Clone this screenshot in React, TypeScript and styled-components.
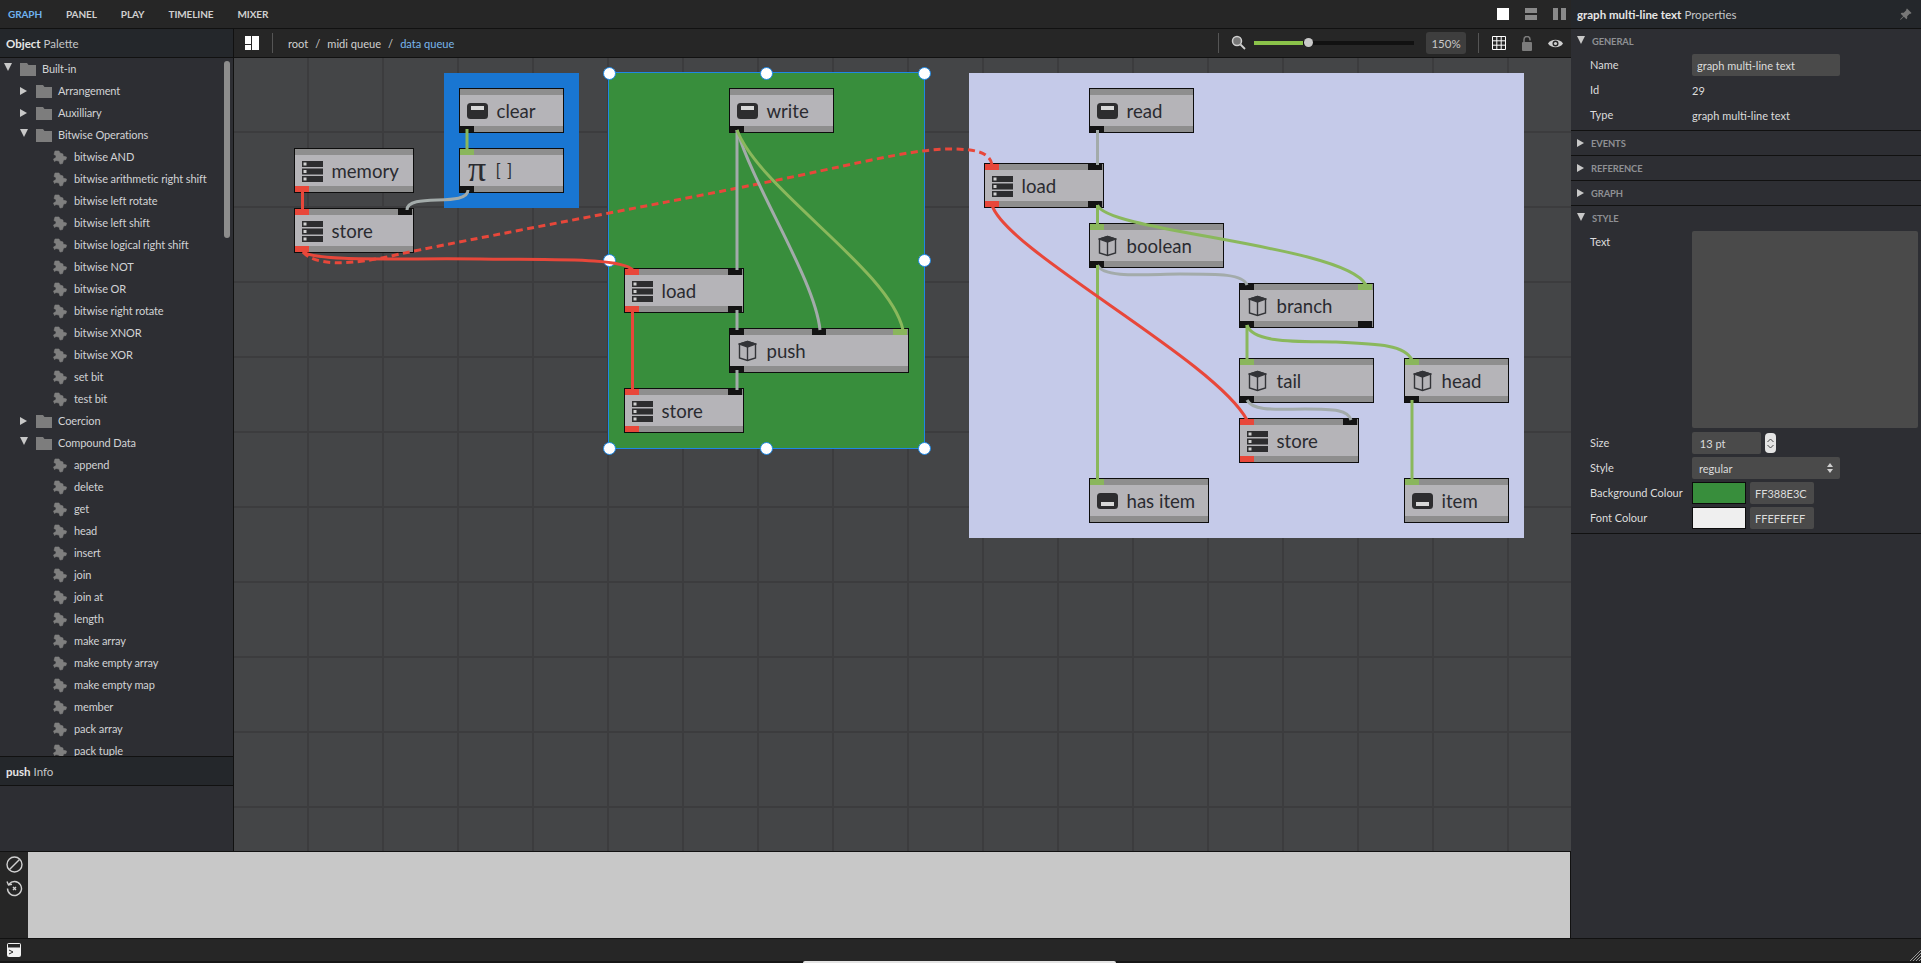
import React from "react";
import styled, { createGlobalStyle } from "styled-components";
import { BsPinAngleFill } from "react-icons/bs";

const Global = createGlobalStyle`
  html, body { margin: 0; padding: 0; background: #111; overflow: hidden; }
  body { font-family: Lato, "Open Sans", sans-serif; }
  * { box-sizing: border-box; }
`;

const ORIGIN_X = 234;
const ORIGIN_Y = 58;

const Root = styled.div`
  width: 1921px; height: 963px; display: flex; flex-direction: column; overflow: hidden; position: relative;
  background: #161616; font-family: Lato, sans-serif;
`;
const Main = styled.div`display: flex; height: 938px; flex: none;`;
const Work = styled.div`width: 1571px; display: flex; flex-direction: column; flex: none;`;
const TopBar = styled.div`
  height: 29px; background: #262626; border-bottom: 1px solid #111; display: flex; align-items: center;
  padding: 0 8px; flex: none;
`;
const Tab = styled.span<{ $active?: boolean }>`
  font-size: 10px; font-weight: 700; margin-right: 24px; letter-spacing: -0.1px;
  color: ${p => (p.$active ? "#6fb3f0" : "#d0d0d0")};
`;
const Spacer = styled.div`flex: 1;`;
const WinButtons = styled.div`display: flex; gap: 16px; margin-right: -3px; align-items: center;`;
const WinIcon = styled.svg`display: block;`;

const Columns = styled.div`flex: 1; display: flex; min-height: 0;`;
const LeftPanel = styled.div`
  width: 234px; flex: none; background: #2d2e33; border-right: 1px solid #111; display: flex; flex-direction: column;
`;
const PanelTitle = styled.div`
  height: 29px; flex: none; background: #24272b; border-bottom: 1px solid #111; display: flex; align-items: center;
  padding-left: 6px; font-size: 11.5px; color: #c4c6c8;
`;
const TitleStrong = styled.span`font-weight: 700; color: #e6e6e6; margin-right: 3px;`;
const Tree = styled.div`height: 698px; flex: none; overflow: hidden; position: relative;`;
const TreeRow = styled.div<{ $level: number }>`
  height: 22px; display: flex; align-items: center; font-size: 11px; letter-spacing: -0.1px; color: #d2d3d5; line-height: 20px;
  padding-left: ${p => 4 + p.$level * 16}px; padding-bottom: 1px; white-space: nowrap;
`;
const Arrow = styled.span<{ $open: boolean }>`
  width: 0; height: 0; flex: none; margin-right: ${p => (p.$open ? 8 : 9)}px;
  ${p => p.$open
    ? "border-left:4px solid transparent;border-right:4px solid transparent;border-top:8px solid #c8c8c8;margin-top:-3px;"
    : "border-top:4px solid transparent;border-bottom:4px solid transparent;border-left:7px solid #c8c8c8;"}
`;
const FolderSvg = styled.svg`width: 16px; height: 13px; margin-right: 6px; flex: none; margin-top: 2px;`;
const PuzzleSvg = styled.svg`width: 14px; height: 15px; margin-left: 17px; margin-right: 7px; flex: none; margin-top: 2px;`;
const Scrollbar = styled.div`
  position: absolute; left: 224px; top: 3px; width: 6px; height: 177px; border-radius: 3px; background: #8d8d8d;
`;
const InfoTitle = styled(PanelTitle)`border-top: 1px solid #111; height: 30px;`;
const InfoBody = styled.div`flex: 1;`;

const CenterCol = styled.div`flex: 1; display: flex; flex-direction: column; min-width: 0;`;
const Toolbar = styled.div`
  height: 29px; flex: none; background: #262626; border-bottom: 1px solid #111; display: flex; align-items: center;
  padding-left: 11px; font-size: 11px; color: #cfcfcf;
`;
const Sep = styled.div`width: 1px; height: 20px; background: #555;`;
const Crumbs = styled.div`display: flex; gap: 6px; margin-left: 15px; font-size: 11.1px;`;
const Crumb = styled.span<{ $active?: boolean }>`color: ${p => (p.$active ? "#79b6ec" : "#d0d0d0")};`;
const Slash = styled.span`margin: 0 1px; color: #d0d0d0;`;
const Slider = styled.div`width: 160px; height: 4px; background: #111; position: relative; margin: 0 12px 0 8px;`;
const SliderFill = styled.div`width: 49px; height: 4px; background: #8bc34a;`;
const Thumb = styled.div`
  position: absolute; left: 50px; top: -3px; width: 9px; height: 9px; border-radius: 50%; background: #c9c9c9;
`;
const Zoom = styled.div`
  width: 40px; height: 22px; background: #3e3e3e; border-radius: 3px; display: flex; align-items: center; justify-content: center;
  font-size: 11.5px; color: #c8c8c8; margin-right: 12px;
`;
const ToolIcons = styled.div`display: flex; align-items: center; gap: 16px; margin: 0 8px 0 13px;`;

const Canvas = styled.div`
  flex: 1; position: relative; overflow: hidden; background-color: #444547;
  background-image:
    linear-gradient(to right, transparent 73px, #3c3c3e 73px, #3c3c3e 75px),
    linear-gradient(to bottom, transparent 73px, #3c3c3e 73px, #3c3c3e 75px);
  background-size: 75px 75px;
`;
const Comment = styled.div<{ $x: number; $y: number; $w: number; $h: number; $bg: string; $sel?: boolean }>`
  position: absolute; left: ${p => p.$x - ORIGIN_X}px; top: ${p => p.$y - ORIGIN_Y}px;
  width: ${p => p.$w}px; height: ${p => p.$h}px; background: ${p => p.$bg};
  ${p => (p.$sel ? "outline: 1.5px solid #1e88e5;" : "")}
`;
const Handle = styled.div<{ $x: number; $y: number }>`
  position: absolute; left: ${p => p.$x - ORIGIN_X - 6.5}px; top: ${p => p.$y - ORIGIN_Y - 6.5}px;
  width: 13px; height: 13px; border-radius: 50%; background: #fff; border: 1.5px solid #1e88e5;
`;
const WireLayer = styled.svg`position: absolute; left: 0; top: 0; pointer-events: none; z-index: 3;`;

const NodeBox = styled.div<{ $x: number; $y: number; $w: number }>`
  position: absolute; left: ${p => p.$x - ORIGIN_X}px; top: ${p => p.$y - ORIGIN_Y}px; width: ${p => p.$w}px; height: 45px;
  background: #b5b4b8; border: 1.5px solid #0d0d0d; z-index: 2; display: flex; align-items: center; padding-left: 7px;
  color: #2a2b30; font-size: 18.6px;
`;
const Strip = styled.div<{ $edge: "top" | "bottom" }>`
  position: absolute; left: 0; right: 0; ${p => p.$edge}: 0; height: 6px; background: #8e8e8e;
`;
const PortBox = styled.div<{ $edge: "top" | "bottom"; $at: number; $kind: string }>`
  position: absolute; ${p => p.$edge}: 0; left: ${p => p.$at}px; width: 14px; height: 6px;
  background: ${p => (p.$kind === "r" ? "#e8473a" : p.$kind === "g" ? "#8ab65c" : "#141414")};
`;
const NodeIconSlot = styled.div`width: 29.5px; display: flex; flex: none; align-items: center; margin-top: 1px;`;
const NodeLabel = styled.span`white-space: nowrap;`;
const PiGlyph = styled.span`font-family: "Liberation Serif", serif; font-size: 36px; line-height: 1; color: #2a2b30; margin-top: -5px; margin-left: 1px;`;
const MonoLabel = styled.span`font-size: 17px; letter-spacing: 1px; margin-left: -1px;`;
const CubeWrap = styled.div`margin-left: 1px; display: flex;`;

const Console = styled.div`height: 87px; flex: none; display: flex; border-top: 1px solid #111;`;
const ConsoleSide = styled.div`
  width: 28px; background: #262626; display: flex; flex-direction: column; align-items: center; gap: 7px; padding-top: 4px; flex: none;
`;
const ConsoleBody = styled.div`flex: 1; background: #c8c8c8; border-right: 1px solid #111;`;

const RightPanel = styled.div`width: 350px; flex: none; background: #2d2e33; display: flex; flex-direction: column;`;
const RightTitle = styled.div`
  height: 29px; flex: none; background: #24272b; border-bottom: 1px solid #111; display: flex; align-items: center;
  padding: 0 9px 0 6px; font-size: 11.5px; color: #c4c6c8;
`;
const Section = styled.div<{ $pad?: number }>`border-bottom: 1px solid #111; padding-bottom: ${p => p.$pad ?? 0}px;`;
const SectionHead = styled.div`
  height: 24px; display: flex; align-items: center; padding-left: 6px; font-size: 9.4px; font-weight: 700; color: #8f9094; letter-spacing: -0.1px;
`;
const HeadArrow = styled(Arrow)`margin-right: 7px;`;
const Props = styled.div`display: grid; grid-template-columns: 102px 1fr; row-gap: 3px; padding-left: 19px; margin-top: 1px; align-items: center;`;
const Label = styled.div`font-size: 11px; color: #dcdcdc; height: 22px; line-height: 22px; white-space: nowrap;`;
const Value = styled.div`font-size: 11px; color: #dcdcdc; height: 22px; display: flex; align-items: center; gap: 4px;`;
const Field = styled.div<{ $w: number }>`
  width: ${p => p.$w}px; height: 22px; background: #4a4a4a; border-radius: 2px; display: flex; align-items: center; padding: 0 5px;
  font-size: 11px; color: #dcdcdc; flex: none;
`;
const SelectField = styled(Field)`justify-content: space-between; padding: 0 7px;`;
const TextArea = styled.div`width: 226px; height: 197px; background: #4a4a4a; border-radius: 2px;`;
const TextLabel = styled(Label)`align-self: start; height: 197px;`;
const TextValue = styled.div`height: 197px; margin-bottom: 1px;`;
const Stepper = styled.div`
  width: 11px; height: 20px; border-radius: 4px; background: #e4e4e4; display: flex; flex-direction: column; align-items: center; justify-content: center; gap: 1px;
`;
const Swatch = styled.div<{ $c: string }>`
  width: 54px; height: 22px; border: 1.5px solid #0c0c0c; background: ${p => p.$c}; flex: none;
`;
const BottomBar = styled.div`
  height: 23px; flex: none; background: #262626; border-top: 1px solid #111; display: flex; align-items: center; padding-left: 7px; position: relative;
`;
const Grip = styled.svg`position: absolute; right: 0; bottom: 0;`;
const Dock = styled.div`flex: 1; position: relative; background: #161616;`;
const DockWindow = styled.div`
  position: absolute; left: 803px; top: 0; width: 313px; height: 2px; background: #e4e4e4; border-radius: 2px 2px 0 0;
`;

type Port = [edge: "top" | "bottom", at: number, kind: string];
const EDGE = (w: number) => w - 17;

const Folder = () => (
  <FolderSvg viewBox="0 0 16 13"><path d="M0 0 H7 L8.5 2 H16 V13 H0 Z" fill="#7d7d7d" /></FolderSvg>
);
const Puzzle = () => (
  <PuzzleSvg viewBox="0 0 14 15">
    <path
      d="M2 1 L6 1 L7 3 L10 4 L10 6 L13.5 7 L13 9.5 L10.5 10 L9.5 13.5 L7 14 L6 11 L3 10.5 L1.5 11.5 L.5 9 L3 7.5 L3 5.5 L1 4.5 Z"
      fill="#7f7f7f" stroke="#7f7f7f" strokeWidth=".6" strokeLinejoin="round"
    />
  </PuzzleSvg>
);
const Slot = ({ variant }: { variant: "in" | "out" }) => (
  <svg width="21" height="16" viewBox="0 0 21 16">
    <rect width="21" height="16" rx="3.5" fill="#2d2d2f" />
    <rect x="4" y={variant === "in" ? 3 : 9} width="13" height="4" fill="#d8d8d8" />
  </svg>
);
const Db = () => (
  <svg width="21" height="21" viewBox="0 0 21 21">
    {[0, 7.5, 15].map(y => (
      <g key={y}>
        <rect y={y} width="21" height="6" fill="#2d2d2f" />
        <rect x="1.5" y={y + 1.5} width="3" height="3" fill="#d0d0d0" />
      </g>
    ))}
  </svg>
);
const Cube = () => (
  <CubeWrap>
    <svg width="19" height="22" viewBox="0 0 19 22" fill="none" stroke="#333438" strokeWidth="1.4">
      <path d="M9.5 1.5 L17.5 4 L17.5 18 L9.5 20.5 L1.5 18 L1.5 4 Z" />
      <path d="M9.5 7 L9.5 20.5" />
      <path d="M1.5 4 L9.5 7 L17.5 4 L9.5 1.5 Z" fill="#333438" />
    </svg>
  </CubeWrap>
);

type NodeDef = { x: number; y: number; w: number; label: string; icon: "in" | "out" | "db" | "cube" | "pi"; ports: Port[] };
const L = 0;

const nodes: NodeDef[] = [
  { x: 294, y: 148, w: 120, label: "memory", icon: "db", ports: [["bottom", L, "r"]] },
  { x: 294, y: 208, w: 120, label: "store", icon: "db", ports: [["top", L, "r"], ["top", EDGE(120), "k"], ["bottom", L, "r"]] },
  { x: 459, y: 88, w: 105, label: "clear", icon: "in", ports: [["bottom", L, "k"]] },
  { x: 459, y: 148, w: 105, label: "[ ]", icon: "pi", ports: [["top", L, "g"], ["bottom", L, "k"]] },
  { x: 729, y: 88, w: 105, label: "write", icon: "in", ports: [["bottom", L, "k"]] },
  { x: 624, y: 268, w: 120, label: "load", icon: "db", ports: [["top", L, "r"], ["top", EDGE(120), "k"], ["bottom", L, "r"], ["bottom", EDGE(120), "k"]] },
  { x: 729, y: 328, w: 180, label: "push", icon: "cube", ports: [["top", L, "k"], ["top", 82, "k"], ["top", EDGE(180), "g"], ["bottom", L, "k"]] },
  { x: 624, y: 388, w: 120, label: "store", icon: "db", ports: [["top", L, "r"], ["top", EDGE(120), "k"], ["bottom", L, "r"]] },
  { x: 1089, y: 88, w: 105, label: "read", icon: "in", ports: [["bottom", L, "k"]] },
  { x: 984, y: 163, w: 120, label: "load", icon: "db", ports: [["top", L, "r"], ["top", EDGE(120), "k"], ["bottom", L, "r"], ["bottom", EDGE(120), "k"]] },
  { x: 1089, y: 223, w: 135, label: "boolean", icon: "cube", ports: [["top", L, "g"], ["bottom", L, "k"]] },
  { x: 1239, y: 283, w: 135, label: "branch", icon: "cube", ports: [["top", L, "k"], ["top", EDGE(135), "g"], ["bottom", L, "k"], ["bottom", EDGE(135), "k"]] },
  { x: 1239, y: 358, w: 135, label: "tail", icon: "cube", ports: [["top", L, "g"], ["bottom", L, "k"]] },
  { x: 1404, y: 358, w: 105, label: "head", icon: "cube", ports: [["top", L, "g"], ["bottom", L, "k"]] },
  { x: 1239, y: 418, w: 120, label: "store", icon: "db", ports: [["top", L, "r"], ["top", EDGE(120), "k"], ["bottom", L, "r"]] },
  { x: 1089, y: 478, w: 120, label: "has item", icon: "out", ports: [["top", L, "g"]] },
  { x: 1404, y: 478, w: 105, label: "item", icon: "out", ports: [["top", L, "g"]] },
];

const RED = "#e8473a", GREEN = "#8ab85c", GREY = "#a3abaa";
const wires: { d: string; c: string; dash?: boolean }[] = [
  { d: "M302.5 190 V210", c: RED },
  { d: "M467 129 V150", c: GREEN },
  { d: "M468 190 C468 208 407 192 407 210", c: GREY },
  { d: "M303 252 C320 262 400 258 480 259 C560 260 620 258 633 270", c: RED },
  { d: "M303 252 C315 266 350 266 400 254 C500 233 720 193 820 171 C880 158 920 149 950 149 C975 149 990 152 992 165", c: RED, dash: true },
  { d: "M737 130 V270", c: GREY },
  { d: "M737 130 C755 190 815 280 820 330", c: GREY },
  { d: "M737 130 C760 190 890 270 903 330", c: GREEN },
  { d: "M737 310 V330", c: GREY },
  { d: "M737 370 V390", c: GREY },
  { d: "M632.5 310 V390", c: RED },
  { d: "M1097.5 130 V165", c: GREY },
  { d: "M1097.5 205 V225", c: GREEN },
  { d: "M1097.5 205 C1106 232 1345 245 1366 285", c: GREEN },
  { d: "M1097.5 265 C1103 279 1150 274 1180 274 C1220 274 1243 274 1247 285", c: GREY },
  { d: "M1097.5 265 V480", c: GREEN },
  { d: "M992 205 C1005 250 1215 360 1247 420", c: RED },
  { d: "M1247 325 V360", c: GREEN },
  { d: "M1247 325 C1253 345 1310 341 1335 342 C1380 344 1405 345 1412 360", c: GREEN },
  { d: "M1247 400 C1253 412 1280 409 1305 409 C1335 409 1348 410 1351 420", c: GREY },
  { d: "M1412 400 V480", c: GREEN },
];

const handles: [number, number][] = [
  [609, 73], [766, 73], [924, 73], [609, 260], [924, 260], [609, 448], [766, 448], [924, 448],
];

type TreeItem = { t: string; level: number; kind: "open" | "closed" | "leaf" };
const leaf = (t: string): TreeItem => ({ t, level: 2, kind: "leaf" });
const tree: TreeItem[] = [
  { t: "Built-in", level: 0, kind: "open" },
  { t: "Arrangement", level: 1, kind: "closed" },
  { t: "Auxilliary", level: 1, kind: "closed" },
  { t: "Bitwise Operations", level: 1, kind: "open" },
  ...["bitwise AND", "bitwise arithmetic right shift", "bitwise left rotate", "bitwise left shift", "bitwise logical right shift", "bitwise NOT", "bitwise OR", "bitwise right rotate", "bitwise XNOR", "bitwise XOR", "set bit", "test bit"].map(leaf),
  { t: "Coercion", level: 1, kind: "closed" },
  { t: "Compound Data", level: 1, kind: "open" },
  ...["append", "delete", "get", "head", "insert", "join", "join at", "length", "make array", "make empty array", "make empty map", "member", "pack array", "pack tuple"].map(leaf),
];

const GraphNode = ({ n }: { n: NodeDef }) => (
  <NodeBox $x={n.x} $y={n.y} $w={n.w}>
    <Strip $edge="top" />
    <Strip $edge="bottom" />
    {n.ports.map((p, i) => <PortBox key={i} $edge={p[0]} $at={p[1]} $kind={p[2]} />)}
    <NodeIconSlot>
      {n.icon === "db" && <Db />}
      {n.icon === "cube" && <Cube />}
      {(n.icon === "in" || n.icon === "out") && <Slot variant={n.icon} />}
      {n.icon === "pi" && <PiGlyph>π</PiGlyph>}
    </NodeIconSlot>
    {n.icon === "pi" ? <MonoLabel>{n.label}</MonoLabel> : <NodeLabel>{n.label}</NodeLabel>}
  </NodeBox>
);

export default function App() {
  return (
    <Root>
      <Global />
      <Main>
        <Work>
          <TopBar>
            <Tab $active>GRAPH</Tab><Tab>PANEL</Tab><Tab>PLAY</Tab><Tab>TIMELINE</Tab><Tab>MIXER</Tab>
            <Spacer />
            <WinButtons>
              <WinIcon width="12" height="12" viewBox="0 0 12 12"><rect width="12" height="12" fill="#fff" /></WinIcon>
              <WinIcon width="12" height="12" viewBox="0 0 12 12"><rect width="12" height="5" fill="#8a8a8a" /><rect y="7" width="12" height="5" fill="#8a8a8a" /></WinIcon>
              <WinIcon width="13" height="12" viewBox="0 0 13 12"><rect width="5" height="12" fill="#8a8a8a" /><rect x="8" width="5" height="12" fill="#8a8a8a" /></WinIcon>
            </WinButtons>
          </TopBar>
          <Columns>
            <LeftPanel>
              <PanelTitle><TitleStrong>Object</TitleStrong> Palette</PanelTitle>
              <Tree>
                {tree.map((it, i) => (
                  <TreeRow key={i} $level={it.level}>
                    {it.kind === "leaf" ? <Puzzle /> : (
                      <>
                        <Arrow $open={it.kind === "open"} />
                        <Folder />
                      </>
                    )}
                    {it.t}
                  </TreeRow>
                ))}
                <Scrollbar />
              </Tree>
              <InfoTitle><TitleStrong>push</TitleStrong> Info</InfoTitle>
              <InfoBody />
            </LeftPanel>
            <CenterCol>
              <Toolbar>
                <svg width="14" height="14" viewBox="0 0 14 14" style={{ marginRight: 13 }}>
                  <rect width="6" height="8" fill="#fff" /><rect y="9" width="6" height="5" fill="#fff" /><rect x="7" width="7" height="14" fill="#fff" />
                </svg>
                <Sep />
                <Crumbs>
                  <Crumb>root</Crumb><Slash>/</Slash><Crumb>midi queue</Crumb><Slash>/</Slash><Crumb $active>data queue</Crumb>
                </Crumbs>
                <Spacer />
                <Sep />
                <svg width="15" height="16" viewBox="0 0 15 16" style={{ margin: "0 0 0 12px" }} fill="none">
                  <circle cx="6" cy="6" r="4.5" fill="#777" stroke="#cfcfcf" strokeWidth="1.5" />
                  <path d="M9.5 9.5 L14 14" stroke="#cfcfcf" strokeWidth="1.8" />
                </svg>
                <Slider><SliderFill /><Thumb /></Slider>
                <Zoom>150%</Zoom>
                <Sep />
                <ToolIcons>
                  <svg width="14" height="14" viewBox="0 0 14 14" fill="none" stroke="#fff" strokeWidth="1">
                    <path d="M.5.5H13.5V13.5H.5Z M.5 4.8H13.5 M.5 9.2H13.5 M4.8.5V13.5 M9.2.5V13.5" />
                  </svg>
                  <svg width="10" height="15" viewBox="0 0 10 15" fill="none">
                    <rect y="6" width="10" height="9" rx="1" fill="#7c7c7c" />
                    <path d="M2 6 V3.5 A3 3 0 0 1 8 3.5 V4.5" stroke="#7c7c7c" strokeWidth="1.5" />
                  </svg>
                  <svg width="15" height="11" viewBox="0 0 15 11">
                    <path d="M0 5.5 C3 .5 12 .5 15 5.5 C12 10.5 3 10.5 0 5.5 Z" fill="#cfcfcf" />
                    <circle cx="7.5" cy="5.5" r="3" fill="#262626" />
                    <circle cx="7.5" cy="5.5" r="1.6" fill="#cfcfcf" />
                  </svg>
                </ToolIcons>
              </Toolbar>
              <Canvas>
                <Comment $x={444} $y={73} $w={135} $h={135} $bg="#1976d2" />
                <Comment $x={609} $y={73} $w={315} $h={375} $bg="#388e3c" $sel />
                <Comment $x={969} $y={73} $w={555} $h={465} $bg="#c5cae9" />
                {handles.map(([x, y], i) => <Handle key={i} $x={x} $y={y} />)}
                {nodes.map((n, i) => <GraphNode key={i} n={n} />)}
                <WireLayer width="1337" height="793" viewBox={`${ORIGIN_X} ${ORIGIN_Y} 1337 793`} fill="none">
                  {wires.map((w, i) => (
                    <path key={i} d={w.d} stroke={w.c} strokeWidth="3" strokeDasharray={w.dash ? "7 4.5" : undefined} />
                  ))}
                </WireLayer>
              </Canvas>
            </CenterCol>
          </Columns>
          <Console>
            <ConsoleSide>
              <svg width="17" height="17" viewBox="0 0 17 17" fill="none" stroke="#d0d0d0" strokeWidth="1.4">
                <circle cx="8.5" cy="8.5" r="7.5" /><path d="M3.5 13.5 L13.5 3.5" />
              </svg>
              <svg width="17" height="17" viewBox="0 0 17 17" fill="none" stroke="#d0d0d0" strokeWidth="1.4">
                <path d="M3 4.2 A7 7 0 1 1 1.5 8.5" />
                <path d="M1 1.5 L2.5 5 L6 4.2" />
                <path d="M7 7 L10 10 M10 7 L7 10" />
              </svg>
            </ConsoleSide>
            <ConsoleBody />
          </Console>
        </Work>
        <RightPanel>
          <RightTitle>
            <TitleStrong>graph multi-line text</TitleStrong> Properties
            <Spacer />
            <BsPinAngleFill size={13} color="#777" />
          </RightTitle>
          <Section $pad={4}>
            <SectionHead><HeadArrow $open />GENERAL</SectionHead>
            <Props>
              <Label>Name</Label><Value><Field $w={148}>graph multi-line text</Field></Value>
              <Label>Id</Label><Value>29</Value>
              <Label>Type</Label><Value>graph multi-line text</Value>
            </Props>
          </Section>
          <Section><SectionHead><HeadArrow $open={false} />EVENTS</SectionHead></Section>
          <Section><SectionHead><HeadArrow $open={false} />REFERENCE</SectionHead></Section>
          <Section><SectionHead><HeadArrow $open={false} />GRAPH</SectionHead></Section>
          <Section $pad={4}>
            <SectionHead><HeadArrow $open />STYLE</SectionHead>
            <Props>
              <TextLabel>Text</TextLabel><TextValue><TextArea /></TextValue>
              <Label>Size</Label>
              <Value>
                <Field $w={69}>&nbsp;13 pt</Field>
                <Stepper>
                  <svg width="7" height="5" viewBox="0 0 7 5" fill="none" stroke="#444" strokeWidth="1"><path d="M.5 4 L3.5 1 L6.5 4" /></svg>
                  <svg width="7" height="5" viewBox="0 0 7 5" fill="none" stroke="#444" strokeWidth="1"><path d="M.5 1 L3.5 4 L6.5 1" /></svg>
                </Stepper>
              </Value>
              <Label>Style</Label>
              <Value>
                <SelectField $w={148}>
                  regular
                  <svg width="6" height="10" viewBox="0 0 6 10" fill="#cfcfcf"><path d="M0 4 L3 0 L6 4 Z M0 6 L3 10 L6 6 Z" /></svg>
                </SelectField>
              </Value>
              <Label>Background Colour</Label>
              <Value><Swatch $c="#388e3c" /><Field $w={64}>FF388E3C</Field></Value>
              <Label>Font Colour</Label>
              <Value><Swatch $c="#efefef" /><Field $w={64}>FFEFEFEF</Field></Value>
            </Props>
          </Section>
        </RightPanel>
      </Main>
      <BottomBar>
        <svg width="14" height="14" viewBox="0 0 14 14">
          <rect width="14" height="14" rx="2" fill="#f2f2f2" />
          <rect x="1" y="1" width="12" height="3.5" fill="#262626" />
          <path d="M2 7 L6 9 L2 11" fill="none" stroke="#262626" strokeWidth="1" />
        </svg>
        <Grip width="12" height="12" viewBox="0 0 12 12" stroke="#9a9a9a" strokeWidth="1">
          <path d="M12 1 L1 12 M12 4 L4 12 M12 7 L7 12 M12 10 L10 12" />
        </Grip>
      </BottomBar>
      <Dock><DockWindow /></Dock>
    </Root>
  );
}
